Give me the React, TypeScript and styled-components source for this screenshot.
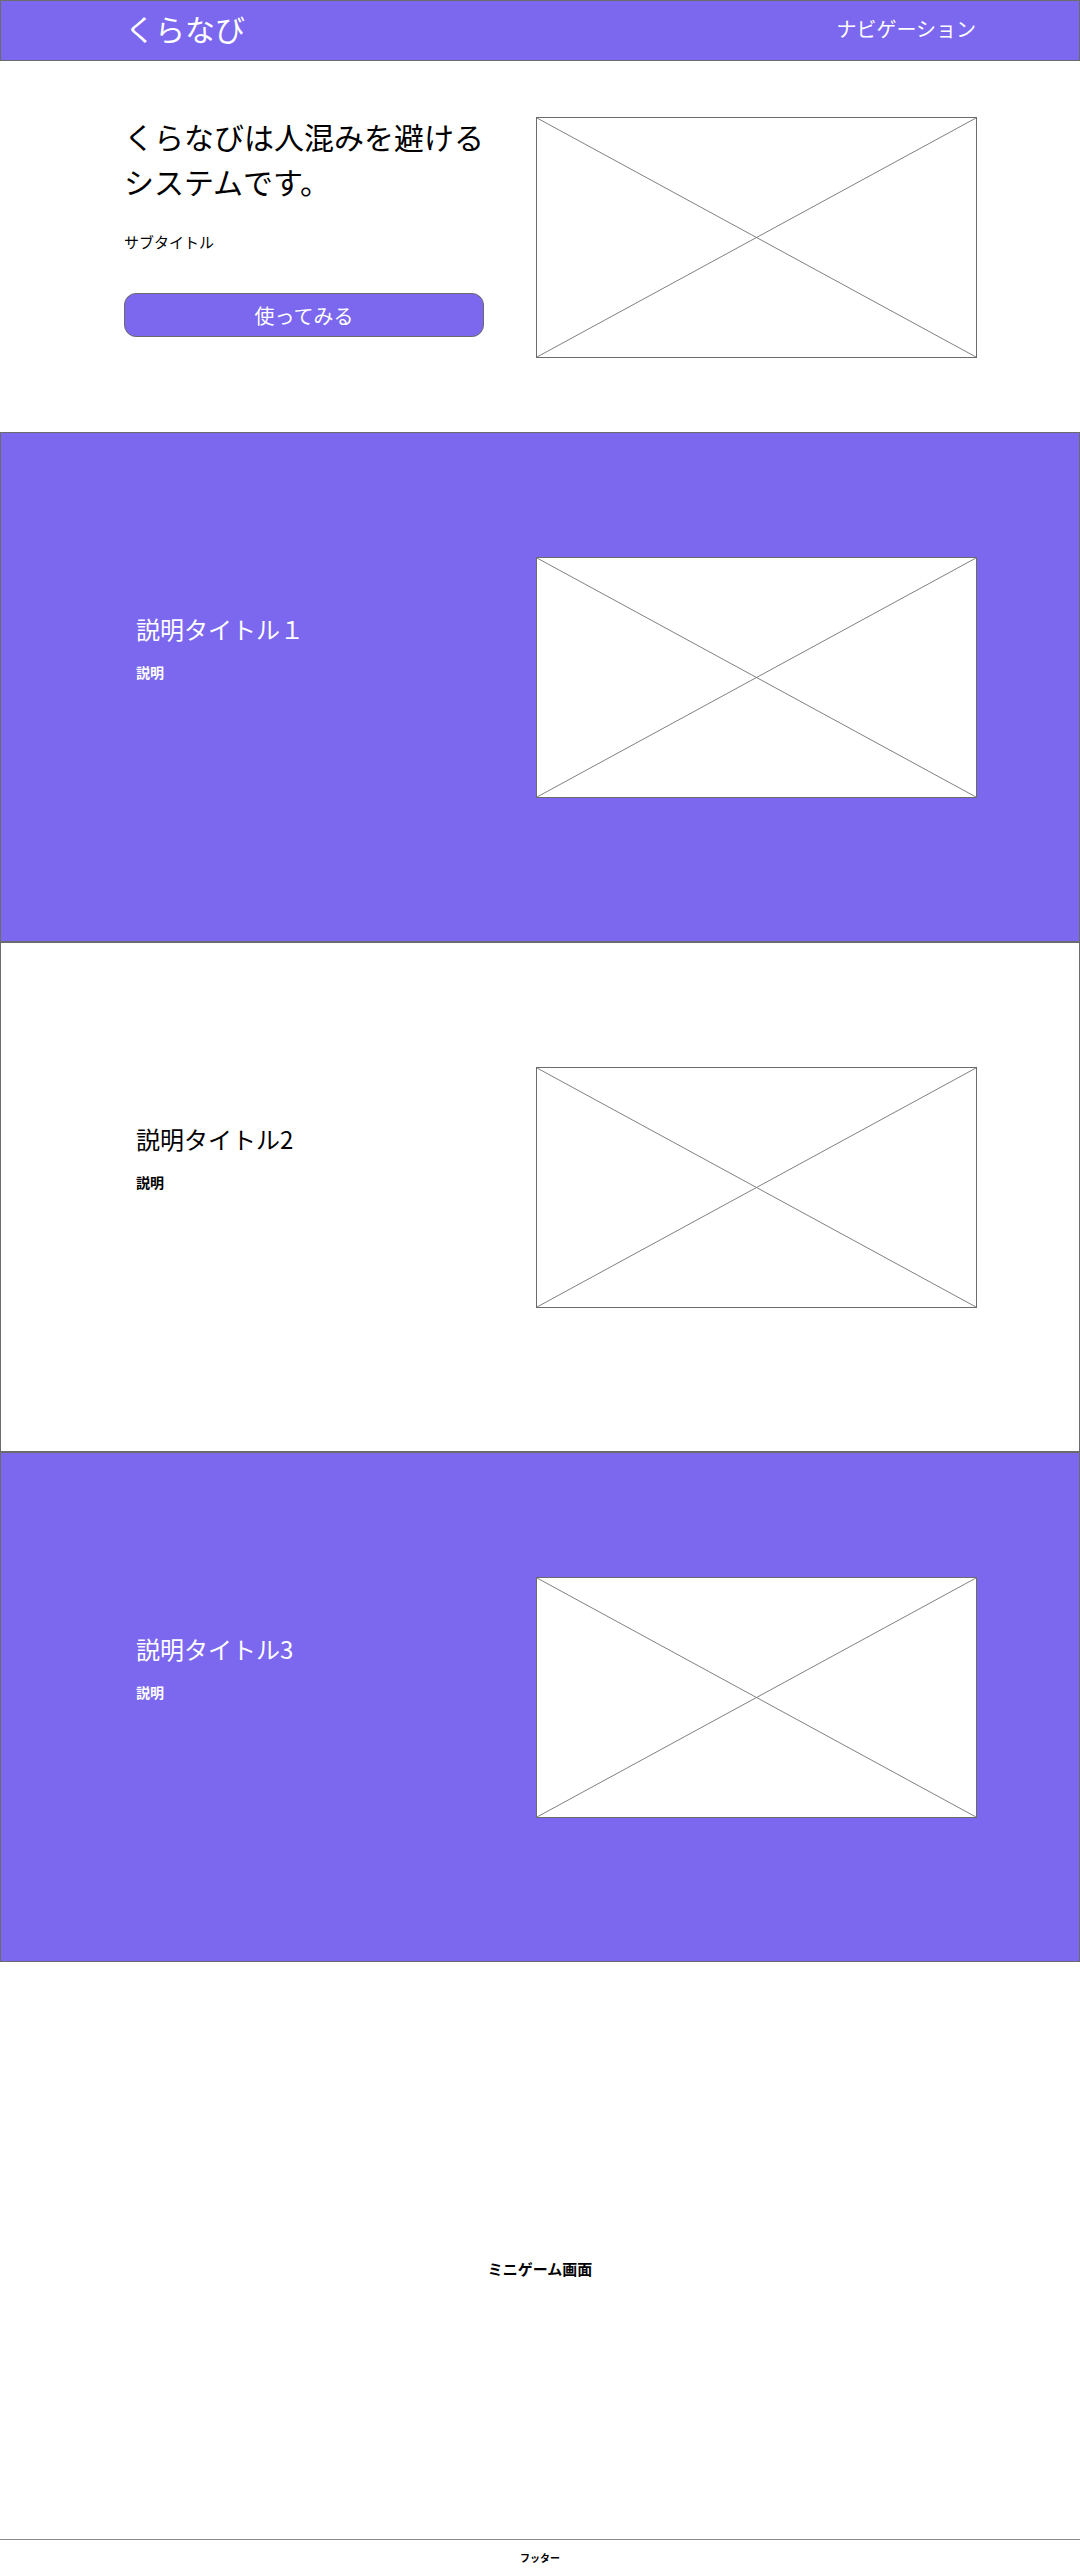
import styled, { createGlobalStyle } from 'styled-components';

const PURPLE = '#7b68ee';
const LINE = '#6b6b6b';

const GlobalStyle = createGlobalStyle`
  body {
    margin: 0;
    font-family: "Noto Sans CJK JP", "Noto Sans", sans-serif;
    color: #000;
  }
  * {
    box-sizing: border-box;
  }
`;

const Header = styled.header`
  height: 61px;
  display: flex;
  justify-content: space-between;
  align-items: center;
  padding: 0 103px 0 124px;
  background-color: ${PURPLE};
  border: 1px solid ${LINE};
  color: #fff;
`;

const Logo = styled.div`
  margin-top: -5px;
  font-size: 30px;
  line-height: 1;
`;

const Nav = styled.nav`
  margin-top: -3px;
  font-size: 20px;
  line-height: 1;
`;

const Hero = styled.section`
  display: flex;
  justify-content: space-between;
  align-items: flex-start;
  padding: 56px 103px 74px 124px;
`;

const HeroText = styled.div`
  width: 360px;
  margin-top: -3px;
  display: flex;
  flex-direction: column;
`;

const Headline = styled.h1`
  margin: 0;
  font-size: 30px;
  font-weight: 400;
  line-height: 45px;
`;

const Subtitle = styled.p`
  margin: 27px 0 0;
  font-size: 15px;
  line-height: 22px;
`;

const TryButton = styled.button`
  margin-top: 40px;
  width: 360px;
  height: 44px;
  border: 1px solid ${LINE};
  border-radius: 12px;
  background-color: ${PURPLE};
  color: #fff;
  font-family: inherit;
  font-size: 20px;
  cursor: pointer;
`;

const Frame = styled.div`
  width: 441px;
  height: 241px;
  flex-shrink: 0;
  background-color: #fff;
  border: 1px solid ${LINE};
  svg {
    display: block;
    width: 100%;
    height: 100%;
  }
`;

const Feature = styled.section<{ $filled: boolean }>`
  height: 510px;
  display: flex;
  justify-content: space-between;
  align-items: flex-start;
  padding: 124px 102px 0 135px;
  border: 1px solid ${LINE};
  background-color: ${(p) => (p.$filled ? PURPLE : '#fff')};
  color: ${(p) => (p.$filled ? '#fff' : '#000')};
`;

const FeatureText = styled.div`
  margin-top: 54px;
  display: flex;
  flex-direction: column;
  gap: 15px;
`;

const FeatureTitle = styled.h2`
  margin: 0;
  font-size: 24px;
  font-weight: 400;
  line-height: 36px;
`;

const FeatureBody = styled.p`
  margin: 0;
  font-size: 14px;
  font-weight: 700;
  line-height: 21px;
`;

const GameArea = styled.section`
  height: 577px;
  display: flex;
  justify-content: center;
  align-items: center;
  padding-top: 36px;
  font-size: 15px;
  font-weight: 700;
`;

const Footer = styled.footer`
  height: 33px;
  padding-top: 10px;
  border-top: 1px solid #8a8a8a;
  text-align: center;
  font-size: 10px;
  font-weight: 700;
  line-height: 15px;
`;

function Placeholder() {
  return (
    <Frame>
      <svg viewBox="0 0 100 100" preserveAspectRatio="none">
        <line x1="0" y1="0" x2="100" y2="100" stroke="#808080" strokeWidth="1" vectorEffect="non-scaling-stroke" />
        <line x1="100" y1="0" x2="0" y2="100" stroke="#808080" strokeWidth="1" vectorEffect="non-scaling-stroke" />
      </svg>
    </Frame>
  );
}

const features = [
  { title: '説明タイトル１', body: '説明', filled: true },
  { title: '説明タイトル2', body: '説明', filled: false },
  { title: '説明タイトル3', body: '説明', filled: true },
];

export default function App() {
  return (
    <>
      <GlobalStyle />
      <Header>
        <Logo>くらなび</Logo>
        <Nav>ナビゲーション</Nav>
      </Header>
      <Hero>
        <HeroText>
          <Headline>くらなびは人混みを避けるシステムです。</Headline>
          <Subtitle>サブタイトル</Subtitle>
          <TryButton>使ってみる</TryButton>
        </HeroText>
        <Placeholder />
      </Hero>
      {features.map((f) => (
        <Feature key={f.title} $filled={f.filled}>
          <FeatureText>
            <FeatureTitle>{f.title}</FeatureTitle>
            <FeatureBody>{f.body}</FeatureBody>
          </FeatureText>
          <Placeholder />
        </Feature>
      ))}
      <GameArea>ミニゲーム画面</GameArea>
      <Footer>フッター</Footer>
    </>
  );
}
